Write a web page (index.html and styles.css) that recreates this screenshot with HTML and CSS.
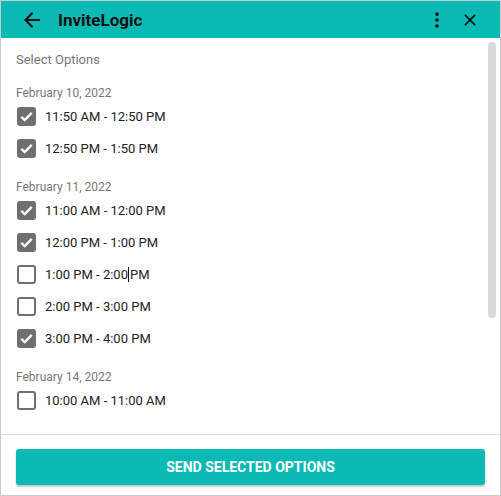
FILE: index.html
```html
<!DOCTYPE html>
<html>
<head>
<meta charset="utf-8">
<link rel="stylesheet" href="styles.css">
</head>
<body>
<div class="window">
  <div class="header">
    <svg class="icon back" viewBox="0 0 24 24" width="24" height="24"><path d="M20 11H7.83l5.59-5.59L12 4l-8 8 8 8 1.41-1.41L7.83 13H20v-2z"/></svg>
    <div class="title">InviteLogic</div>
    <svg class="icon more" viewBox="0 0 24 24" width="24" height="24"><circle cx="12" cy="5.5" r="2"/><circle cx="12" cy="12" r="2"/><circle cx="12" cy="18.5" r="2"/></svg>
    <svg class="icon close" viewBox="0 0 24 24" width="24" height="24"><path d="M19 6.41L17.59 5 12 10.59 6.41 5 5 6.41 10.59 12 5 17.59 6.41 19 12 13.41 17.59 19 19 17.59 13.41 12z"/></svg>
  </div>
  <div class="body">
    <div class="content">
      <div class="heading">Select Options</div>
      <div class="group">
        <div class="date">February 10, 2022</div>
        <div class="row"><span class="box checked"><svg viewBox="0 0 20 20"><path d="M4.5 10.2l3.6 3.6 7.4-7.6"/></svg></span><span class="label">11:50 AM - 12:50 PM</span></div>
        <div class="row"><span class="box checked"><svg viewBox="0 0 20 20"><path d="M4.5 10.2l3.6 3.6 7.4-7.6"/></svg></span><span class="label">12:50 PM - 1:50 PM</span></div>
      </div>
      <div class="group">
        <div class="date">February 11, 2022</div>
        <div class="row"><span class="box checked"><svg viewBox="0 0 20 20"><path d="M4.5 10.2l3.6 3.6 7.4-7.6"/></svg></span><span class="label">11:00 AM - 12:00 PM</span></div>
        <div class="row"><span class="box checked"><svg viewBox="0 0 20 20"><path d="M4.5 10.2l3.6 3.6 7.4-7.6"/></svg></span><span class="label">12:00 PM - 1:00 PM</span></div>
        <div class="row"><span class="box"></span><span class="label">1:00 PM - 2:00<span class="caret"></span>PM</span></div>
        <div class="row"><span class="box"></span><span class="label">2:00 PM - 3:00 PM</span></div>
        <div class="row"><span class="box checked"><svg viewBox="0 0 20 20"><path d="M4.5 10.2l3.6 3.6 7.4-7.6"/></svg></span><span class="label">3:00 PM - 4:00 PM</span></div>
      </div>
      <div class="group">
        <div class="date">February 14, 2022</div>
        <div class="row"><span class="box"></span><span class="label">10:00 AM - 11:00 AM</span></div>
      </div>
    </div>
    <div class="thumb"></div>
  </div>
  <div class="footer">
    <button class="send">SEND SELECTED OPTIONS</button>
  </div>
</div>
</body>
</html>
```
FILE: styles.css
```css
html, body {
  margin: 0;
  padding: 0;
  background: #fff;
}
body {
  font-family: Roboto, "Liberation Sans", Arial, sans-serif;
}
.window {
  width: 501px;
  height: 496px;
  box-sizing: border-box;
  border: 1px solid #cccccc;
  display: flex;
  flex-direction: column;
  overflow: hidden;
}
.header {
  height: 37px;
  flex: none;
  background: #0bbab5;
  display: flex;
  align-items: center;
  color: #111;
}
.icon {
  fill: #111;
  flex: none;
}
.back {
  margin-left: 19px;
  width: 24px;
  height: 24px;
}
.title {
  margin-left: 14px;
  font-size: 17px;
  font-weight: 700;
  flex: 1;
}
.more {
  width: 22px;
  height: 22px;
}
.close {
  margin-left: 12px;
  margin-right: 20px;
  width: 20px;
  height: 20px;
}
.body {
  flex: 1;
  position: relative;
  overflow: hidden;
  border-bottom: 1px solid #dddddd;
}
.content {
  padding: 12px 16px 0 15px;
}
.heading {
  font-size: 13px;
  line-height: 20px;
  color: #777;
  margin-bottom: 3px;
}
.group {
  margin-top: 17px;
}
.date {
  font-size: 12px;
  line-height: 13px;
  color: #777;
}
.row {
  height: 32px;
  display: flex;
  align-items: center;
}
.box {
  width: 19px;
  height: 19px;
  box-sizing: border-box;
  border: 2px solid #6f6f6f;
  border-radius: 3px;
  margin-left: 1px;
  display: flex;
  align-items: center;
  justify-content: center;
  flex: none;
}
.box.checked {
  background: #6f6f6f;
}
.box svg {
  width: 19px;
  height: 19px;
  flex: none;
  fill: none;
  stroke: #fff;
  stroke-width: 2.4;
}
.label {
  margin-left: 9px;
  font-size: 13px;
  color: #222;
  display: inline-flex;
  align-items: center;
  white-space: pre;
}
.caret {
  display: inline-block;
  width: 1px;
  height: 15px;
  background: #111;
  margin: 0 1px 0 0;
}
.thumb {
  position: absolute;
  right: 4px;
  top: 4px;
  width: 8px;
  height: 276px;
  border-radius: 4px;
  background: #dadade;
}
.footer {
  flex: none;
  padding: 14px 15px 10px 15px;
}
.send {
  display: block;
  width: 100%;
  height: 36px;
  border: none;
  border-radius: 3px;
  background: #0bbab5;
  color: #fff;
  font-family: Roboto, "Liberation Sans", Arial, sans-serif;
  font-size: 14px;
  font-weight: 700;
  box-shadow: 0 2px 2px rgba(0,0,0,0.22);
  padding: 0;
}
```
